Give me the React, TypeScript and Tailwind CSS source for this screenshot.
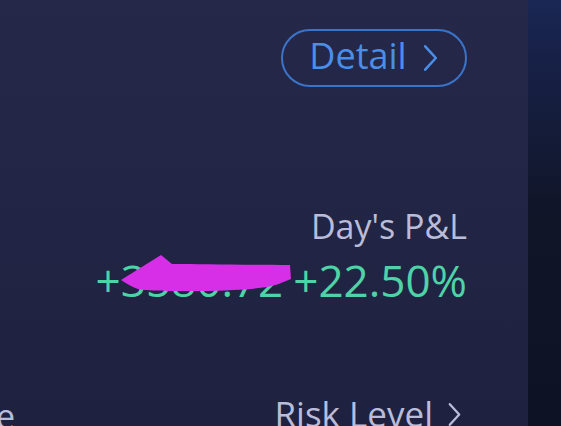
import React from "react";

function Chevron({ className }: { className?: string }) {
  return (
    <svg viewBox="0 0 16 28" className={className} fill="none" stroke="currentColor" strokeWidth={2.4} strokeLinecap="round" strokeLinejoin="round">
      <path d="M3 3 L13 14 L3 25" />
    </svg>
  );
}

export default function App() {
  return (
    <div
      className="flex h-[426px] w-[561px] overflow-hidden"
      style={{ fontFamily: '"Open Sans", "Noto Sans", sans-serif' }}
    >
      {/* account summary card */}
      <div className="relative flex w-[528px] flex-col bg-gradient-to-b from-[#252849] to-[#1e2240] pr-[61px]">
        <div className="flex justify-end pt-[29px]">
          <button className="flex h-[58px] w-[186px] items-center justify-center gap-[15px] rounded-full border-2 border-[#3a74c9] text-[36px] leading-none text-[#4a8ee8]">
            <span className="-mt-[4px]">Detail</span>
            <Chevron className="h-[30px] w-[17px]" />
          </button>
        </div>

        <div className="mt-[117px] flex flex-col items-end">
          <div className="text-[34px] leading-[44px] text-[#b9bdd9]">Day's P&amp;L</div>
          <div className="mt-[6px] flex gap-[10px] text-[44px] font-medium leading-[52px] text-[#4fd3a6]">
            <span>+3580.72</span>
            <span>+22.50%</span>
          </div>
        </div>

        <div className="mt-auto flex items-end justify-between">
          <span className="-mb-[10px] -ml-[4px] text-[34px] leading-[40px] text-[#b9bdd9]">e</span>
          <div className="-mb-[8px] mr-[5px] flex items-center gap-[14px] text-[35px] leading-[40px] text-[#b9bdd9]">
            <span>Risk Level</span>
            <Chevron className="h-[27px] w-[15px]" />
          </div>
        </div>

        {/* marker scribble over the amount */}
        <svg className="pointer-events-none absolute left-0 top-0 h-[426px] w-[528px]" viewBox="0 0 528 426" fill="none">
          <path
            d="M161 255 L172 264 C200 264 240 265 290 265 L291 279 L281 283 C270 288 250 290 200 291 C170 291 145 291 138 289 C132 287 126 283 121 280 Z"
            fill="#d72fe8"
          />
        </svg>
      </div>

      {/* neighbouring panel edge */}
      <div className="flex-1 bg-gradient-to-b from-[#1a2654] via-[#101528] to-[#0d1324]" />
    </div>
  );
}
